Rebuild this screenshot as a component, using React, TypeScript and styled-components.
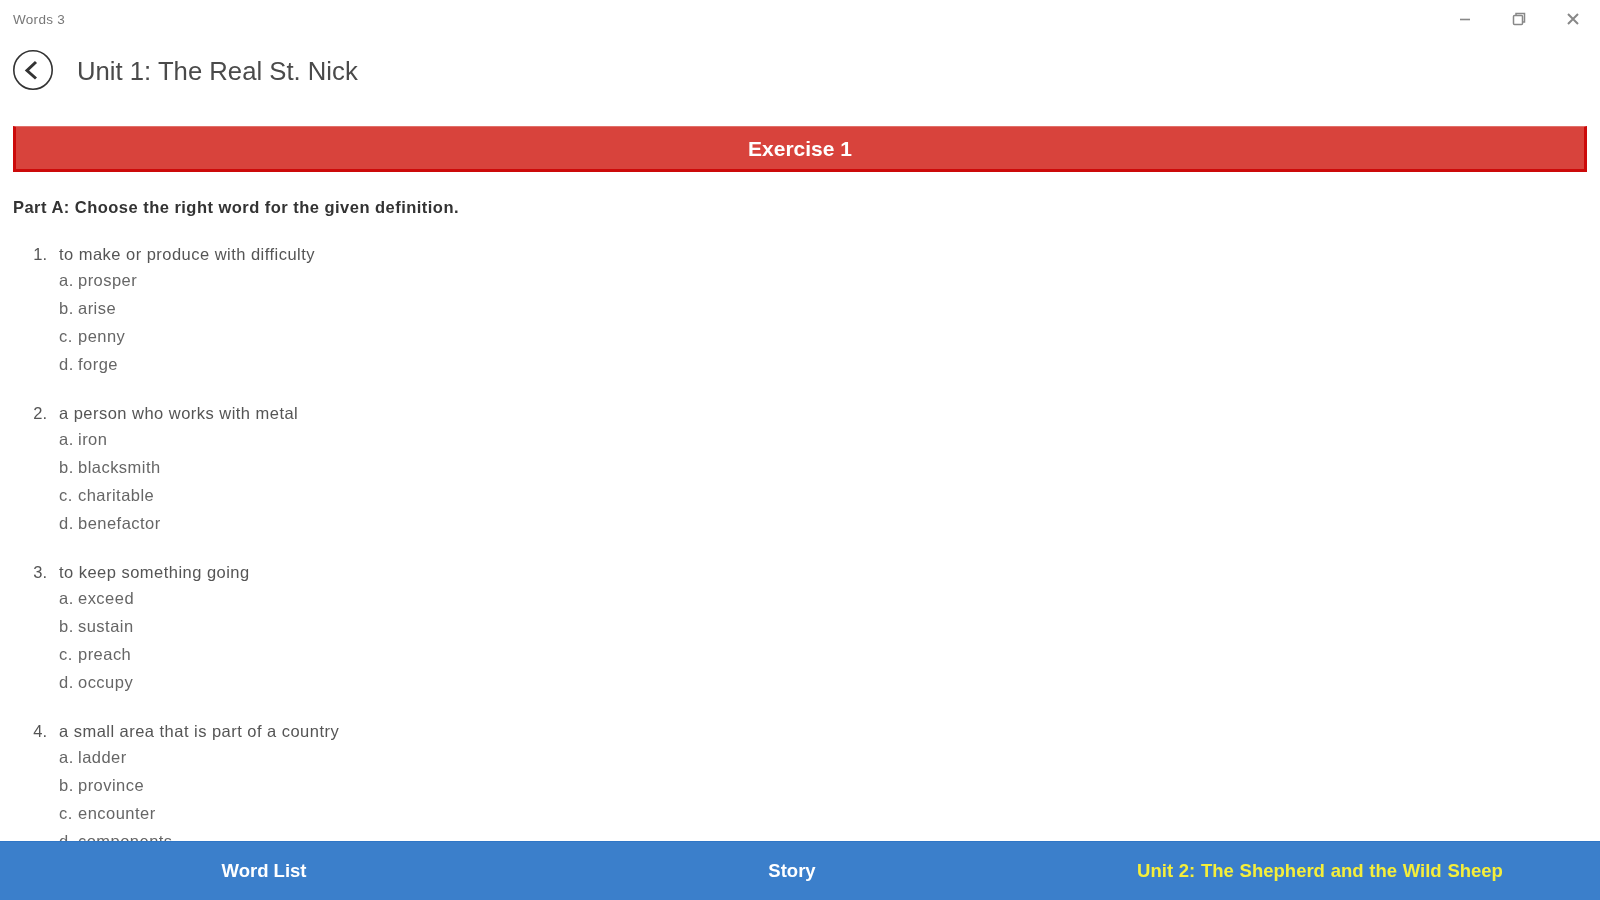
import React from 'react';
import styled, { createGlobalStyle } from 'styled-components';

const GlobalStyle = createGlobalStyle`
  html, body {
    margin: 0;
    padding: 0;
    height: 100%;
    background: #fff;
    overflow: hidden;
  }
  body {
    font-family: "Liberation Sans", Arial, sans-serif;
  }
`;

const Page = styled.div`
  width: 1600px;
  height: 900px;
  display: flex;
  flex-direction: column;
  background: #fff;
  overflow: hidden;
  filter: blur(0.7px);
`;

const TitleBar = styled.div`
  height: 38px;
  flex: none;
  display: flex;
  align-items: center;
  justify-content: space-between;
  padding-left: 13px;
`;

const AppName = styled.span`
  font-size: 13.5px;
  letter-spacing: 0.3px;
  color: #777;
`;

const WindowButtons = styled.div`
  display: flex;
  align-items: center;
`;

const WindowButton = styled.div`
  width: 54px;
  height: 38px;
  display: flex;
  align-items: center;
  justify-content: center;
  color: #888;
`;

const Header = styled.div`
  height: 88px;
  flex: none;
  display: flex;
  align-items: flex-start;
  padding: 12px 0 0 13px;
  box-sizing: border-box;
`;

const BackButton = styled.div`
  width: 41px;
  height: 41px;
  flex: none;
  color: #333;
`;

const Title = styled.h1`
  margin: 0 0 0 23px;
  font-size: 25.7px;
  line-height: 42px;
  font-weight: 400;
  color: #4a4a4a;
`;

const Banner = styled.div`
  flex: none;
  height: 46px;
  margin: 0 13px;
  box-sizing: border-box;
  background: #d8433c;
  border-style: solid;
  border-color: #e0706a #cc0a0a #cc0a0a #cc0a0a;
  border-width: 1px 3px 3px 3px;
  display: flex;
  align-items: center;
  justify-content: center;
  padding-top: 2px;
  color: #fff;
  font-size: 21px;
  font-weight: 700;
`;

const Content = styled.div`
  flex: 1;
  min-height: 0;
  overflow: hidden;
  padding: 25px 13px 0;
`;

const PartHeading = styled.div`
  font-size: 16.5px;
  letter-spacing: 0.47px;
  line-height: 20px;
  font-weight: 700;
  color: #333;
`;

const QuestionList = styled.ol`
  list-style: none;
  margin: 27px 0 0;
  padding: 0;
  display: flex;
  flex-direction: column;
  gap: 21px;
`;

const Prompt = styled.div`
  display: flex;
  height: 20px;
  line-height: 20px;
  font-size: 16.5px;
  letter-spacing: 0.47px;
  color: #555;
`;

const PromptNumber = styled.span`
  width: 34px;
  margin-right: 12px;
  text-align: right;
  flex: none;
  letter-spacing: 0;
`;

const OptionList = styled.ul`
  list-style: none;
  margin: 6px 0 0 46px;
  padding: 0;
  display: flex;
  flex-direction: column;
`;

const Option = styled.li`
  display: flex;
  height: 28px;
  line-height: 20px;
  font-size: 16.5px;
  letter-spacing: 0.47px;
  color: #666;
`;

const OptionLetter = styled.span`
  width: 19px;
  flex: none;
`;

const BottomBar = styled.nav`
  flex: none;
  height: 59px;
  background: #3b7fcb;
  border-top: 1px solid #2f76c6;
  box-sizing: border-box;
  padding-right: 16px;
  display: grid;
  grid-template-columns: repeat(3, 1fr);
  align-items: center;
`;

const BottomLink = styled.div<{ $accent?: boolean }>`
  text-align: center;
  font-size: 18.5px;
  font-weight: 700;
  color: ${(p) => (p.$accent ? '#f5ee3a' : '#fff')};
  word-spacing: ${(p) => (p.$accent ? '0.6px' : '0')};
`;

const questions = [
  { text: 'to make or produce with difficulty', options: ['prosper', 'arise', 'penny', 'forge'] },
  { text: 'a person who works with metal', options: ['iron', 'blacksmith', 'charitable', 'benefactor'] },
  { text: 'to keep something going', options: ['exceed', 'sustain', 'preach', 'occupy'] },
  { text: 'a small area that is part of a country', options: ['ladder', 'province', 'encounter', 'components'] },
];

const letters = ['a.', 'b.', 'c.', 'd.'];

export default function App() {
  return (
    <Page>
      <GlobalStyle />
      <TitleBar>
        <AppName>Words 3</AppName>
        <WindowButtons>
          <WindowButton>
            <svg width="14" height="14" viewBox="0 0 14 14" fill="none" stroke="currentColor" strokeWidth="1.6">
              <path d="M2 7.5h10" />
            </svg>
          </WindowButton>
          <WindowButton>
            <svg width="14" height="14" viewBox="0 0 14 14" fill="none" stroke="currentColor" strokeWidth="1.5">
              <rect x="1.5" y="3.5" width="9" height="9" rx="1" />
              <path d="M4 3.5V1.5h8.5v8.5h-2" />
            </svg>
          </WindowButton>
          <WindowButton>
            <svg width="14" height="14" viewBox="0 0 14 14" fill="none" stroke="currentColor" strokeWidth="2">
              <path d="M2 2l10 10M12 2L2 12" />
            </svg>
          </WindowButton>
        </WindowButtons>
      </TitleBar>
      <Header>
        <BackButton>
          <svg width="41" height="41" viewBox="0 0 41 41" fill="none" stroke="currentColor">
            <circle cx="20" cy="20" r="19.2" strokeWidth="1.6" />
            <path d="M23 12L14 20.5l9 8" strokeWidth="3" />
          </svg>
        </BackButton>
        <Title>Unit 1: The Real St. Nick</Title>
      </Header>
      <Banner>Exercise 1</Banner>
      <Content>
        <PartHeading>Part A: Choose the right word for the given definition.</PartHeading>
        <QuestionList>
          {questions.map((q, i) => (
            <li key={q.text}>
              <Prompt>
                <PromptNumber>{i + 1}.</PromptNumber>
                {q.text}
              </Prompt>
              <OptionList>
                {q.options.map((o, j) => (
                  <Option key={o}>
                    <OptionLetter>{letters[j]}</OptionLetter>
                    {o}
                  </Option>
                ))}
              </OptionList>
            </li>
          ))}
        </QuestionList>
      </Content>
      <BottomBar>
        <BottomLink>Word List</BottomLink>
        <BottomLink>Story</BottomLink>
        <BottomLink $accent>Unit 2: The Shepherd and the Wild Sheep</BottomLink>
      </BottomBar>
    </Page>
  );
}
